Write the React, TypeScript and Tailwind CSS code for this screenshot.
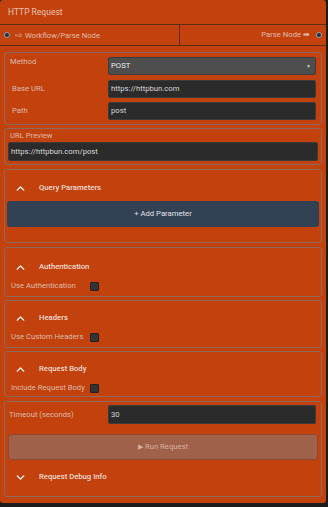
import React from "react";
import { ChevronUp, ChevronDown } from "lucide-react";

const FONT = "font-['Roboto','Liberation_Sans',sans-serif]";

function SectionHead({ title, open = true }: { title: string; open?: boolean }): React.ReactElement {
	return (
		<div className="flex items-center h-[14px] pl-[9px]">
			{open ? (
				<ChevronUp size={13} strokeWidth={2.5} className="text-white" />
			) : (
				<ChevronDown size={13} strokeWidth={2.5} className="text-white" />
			)}
			<span className="ml-[12px] font-medium text-[#f2ddd4]">{title}</span>
		</div>
	);
}

function CheckRow({ label }: { label: string }): React.ReactElement {
	return (
		<div className="flex items-center pl-[6px] h-[10px] leading-[10px]">
			<span className="w-[79px] text-[#dcbcae]">{label}</span>
			<span className="w-[9px] h-[9px] bg-[#333] border border-[#222] rounded-[1px]" />
		</div>
	);
}

function Handle(): React.ReactElement {
	return <span className="w-[6px] h-[6px] rounded-full bg-[#1f2937] border border-[#9ca3af] shrink-0" />;
}

const BOX = "border border-[#8e6a5a] rounded-[3px]";
const INPUT = "bg-[#2b2b2b] border border-[#3a3a3a] rounded-[2px] flex items-center px-[2px] text-[#d8d8d8]";

export default function App(): React.ReactElement {
	return (
		<div className={`w-[328px] h-[507px] bg-[#1c1c1c] ${FONT}`}>
			<div className="w-[326px] h-[503px] bg-[#c2410c] rounded-[3px] text-[7.7px] leading-[10px] flex flex-col">
				{/* Title bar */}
				<div className="h-[25px] flex items-center px-[8px] border-b border-[#5c2b12] text-[8.5px] text-[#e9c2b2]">
					HTTP Request
				</div>

				{/* Handles */}
				<div className="h-[21px] flex border-b border-[#5c2b12] text-[#e0bcad]">
					<div className="w-[180px] flex items-center gap-[5px] pl-[4px] border-r border-[#5c2b12]">
						<Handle />
						<span>
							<span className="text-[9px]">⇨</span> Workflow/Parse Node
						</span>
					</div>
					<div className="flex-1 flex items-center justify-end gap-[6px] pr-[4px]">
						<span>Parse Node ➡</span>
						<Handle />
					</div>
				</div>

				<div className="flex flex-col gap-[3px] px-[4px] pt-[6px]">
					{/* Request config */}
					<div className={`${BOX} px-[5px] pt-[4px] pb-[4px] grid grid-cols-[98px_1fr] gap-y-[4px] items-center`}>
						<span className="self-start text-[#dcbcae]">Method</span>
						<div className="h-[18px] mb-[1px] bg-[#4e4e4e] border border-[#3a3a3a] rounded-[2px] flex items-center justify-between px-[2px] text-[#ececec]">
							<span>POST</span>
							<span className="text-[5px] text-[#ccc] pr-[2px]">▼</span>
						</div>
						<span className="pl-[2px] text-[#dcbcae]">Base URL</span>
						<div className={`h-[18px] ${INPUT}`}>https://httpbun.com</div>
						<span className="pl-[2px] text-[#dcbcae]">Path</span>
						<div className={`h-[18px] ${INPUT}`}>post</div>
					</div>

					{/* URL preview */}
					<div className={`${BOX} px-[3px] pt-[2px] pb-[3px] mb-[1px]`}>
						<div className="pl-[2px] h-[10px] text-[#dcbcae]">URL Preview</div>
						<div className={`mt-[1px] h-[19px] ${INPUT}`}>https://httpbun.com/post</div>
					</div>

					{/* Query parameters */}
					<div className={`${BOX} pt-[11px] pb-[15px] mb-[1px]`}>
						<SectionHead title="Query Parameters" />
						<div className="px-[2px] mt-[6px]">
							<button className="w-full h-[26px] bg-[#334155] rounded-[3px] text-[#e0e3e8] flex items-center justify-center">
								+ Add Parameter
							</button>
						</div>
					</div>

					<div className={`${BOX} pt-[12px] pb-[5px]`}>
						<SectionHead title="Authentication" />
						<div className="mt-[7px]">
							<CheckRow label="Use Authentication" />
						</div>
					</div>

					<div className={`${BOX} pt-[10px] pb-[5px]`}>
						<SectionHead title="Headers" />
						<div className="mt-[7px]">
							<CheckRow label="Use Custom Headers" />
						</div>
					</div>

					<div className={`${BOX} pt-[10px] pb-[3px] mb-[1px]`}>
						<SectionHead title="Request Body" />
						<div className="mt-[7px]">
							<CheckRow label="Include Request Body" />
						</div>
					</div>

					{/* Timeout + run */}
					<div className={`${BOX} px-[3px] pt-[3px] pb-[12px]`}>
						<div className="grid grid-cols-[100px_1fr] items-center pr-[2px]">
							<span className="pl-[1px] text-[#dcbcae]">Timeout (seconds)</span>
							<div className={`h-[19px] ${INPUT}`}>30</div>
						</div>
						<button className="mt-[10px] w-full h-[26px] bg-[#a0614a] border border-[#8a4a34] rounded-[3px] text-[#d6b0a0] flex items-center justify-center gap-[2px]">
							<span className="text-[7px]">▶</span>
							<span>Run Request</span>
						</button>
						<div className="mt-[10px] -mx-[3px]">
							<SectionHead title="Request Debug Info" open={false} />
						</div>
					</div>
				</div>
			</div>
		</div>
	);
}
